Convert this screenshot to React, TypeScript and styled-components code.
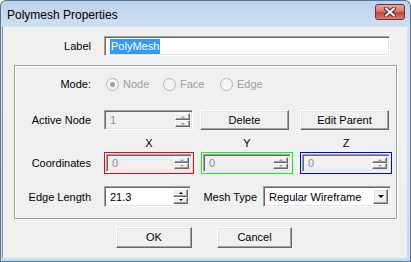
import React from "react";
import styled, { createGlobalStyle } from "styled-components";

const GlobalStyle = createGlobalStyle`
  html, body {
    margin: 0;
    padding: 0;
    background: #ffffff;
  }
  body {
    font-family: "Liberation Sans", Arial, sans-serif;
    font-size: 11px;
    color: #000;
  }
`;

const Window = styled.div`
  width: 411px;
  height: 262px;
  box-sizing: border-box;
  display: flex;
  flex-direction: column;
  background: linear-gradient(#bad2eb, #d2e2f3 30px, #c9ddf1);
  border: 1px solid #5b7594;
  border-bottom-color: #2f89c4;
  border-radius: 6px 6px 0 0;
  overflow: hidden;
`;

const TitleBar = styled.div`
  height: 26px;
  display: flex;
  align-items: center;
  justify-content: space-between;
  padding: 0 5px 0 6px;
  flex-shrink: 0;
`;

const Title = styled.span`
  font-size: 12px;
  color: #000;
  padding-top: 1px;
`;

const CloseButton = styled.div`
  width: 30px;
  height: 16px;
  margin-top: -4px;
  box-sizing: border-box;
  border: 1px solid #6e2b2b;
  border-radius: 3px;
  background: linear-gradient(#e8a69c, #d47a6c 45%, #c1443a 55%, #d87f6f);
  display: flex;
  align-items: center;
  justify-content: center;
`;

const Client = styled.div`
  flex: 1;
  display: flex;
  flex-direction: column;
  background: #f0f0f0;
  margin: 0 3px 3px 2px;
  box-shadow: -1px 0 0 #7d93ae;
`;

const FormRow = styled.div<{ $top: number; $h?: number }>`
  display: flex;
  align-items: center;
  gap: 13px;
  margin-top: ${(p) => p.$top}px;
  height: ${(p) => p.$h ?? 20}px;
`;

const Controls = styled.div`
  display: flex;
  align-items: center;
  height: 100%;
`;

const FieldLabel = styled.span<{ $w: number; $ml?: number }>`
  width: ${(p) => p.$w}px;
  margin-left: ${(p) => p.$ml ?? 0}px;
  text-align: right;
  flex-shrink: 0;
  white-space: nowrap;
`;

const Sunken = styled.div<{ $w: number; $h?: number; $off?: boolean; $ml?: number }>`
  width: ${(p) => p.$w}px;
  height: ${(p) => p.$h ?? 20}px;
  margin-left: ${(p) => p.$ml ?? 0}px;
  box-sizing: border-box;
  display: flex;
  align-items: stretch;
  flex-shrink: 0;
  background: ${(p) => (p.$off ? "#f0f0f0" : "#ffffff")};
  border: 1px solid;
  border-color: #a0a0a0 #ffffff #ffffff #a0a0a0;
  box-shadow: inset 1px 1px 0 #696969, inset -1px -1px 0 #e3e3e3;
  padding: 2px;
`;

const FieldText = styled.span<{ $off?: boolean }>`
  flex: 1;
  display: flex;
  align-items: center;
  padding-left: 3px;
  color: ${(p) => (p.$off ? "#8d8d8d" : "#000")};
  white-space: nowrap;
`;

const Selected = styled.span`
  background: #3399ff;
  color: #fff;
  padding: 1px 1px 2px;
`;

const SpinButtons = styled.div`
  width: 15px;
  display: flex;
  flex-direction: column;
`;

const SpinButton = styled.div`
  flex: 1;
  box-sizing: border-box;
  display: flex;
  align-items: center;
  justify-content: center;
  background: #f0f0f0;
  border: 1px solid;
  border-color: #ffffff #696969 #696969 #ffffff;
  box-shadow: inset -1px -1px 0 #a0a0a0;
`;

const Arrow = styled.span<{ $down?: boolean; $off?: boolean; $size?: number }>`
  width: 0;
  height: 0;
  border-left: ${(p) => p.$size ?? 2}px solid transparent;
  border-right: ${(p) => p.$size ?? 2}px solid transparent;
  ${(p) =>
    p.$down
      ? `border-top: ${p.$size ?? 2}px solid ${p.$off ? "#a0a0a0" : "#000"};`
      : `border-bottom: ${p.$size ?? 2}px solid ${p.$off ? "#a0a0a0" : "#000"};`}
`;

const PushButton = styled.div<{ $w: number; $h?: number; $ml?: number }>`
  width: ${(p) => p.$w}px;
  height: ${(p) => p.$h ?? 20}px;
  margin-left: ${(p) => p.$ml ?? 0}px;
  box-sizing: border-box;
  display: flex;
  align-items: center;
  justify-content: center;
  flex-shrink: 0;
  background: #f0f0f0;
  border: 1px solid;
  border-color: #ffffff #696969 #696969 #ffffff;
  box-shadow: inset -1px -1px 0 #a0a0a0, inset 1px 1px 0 #e3e3e3;
  padding-bottom: 1px;
`;

const GroupBox = styled.div`
  margin: 9px 0 0 11px;
  width: 383px;
  box-sizing: border-box;
  border: 1px solid #a0a0a0;
  box-shadow: inset 1px 1px 0 #fff, 1px 1px 0 #fff;
  padding-bottom: 11px;
  display: flex;
  flex-direction: column;
`;

const RadioGroup = styled.div<{ $off?: boolean }>`
  display: flex;
  align-items: center;
  margin-left: 2px;
  color: ${(p) => (p.$off ? "#a0a0a0" : "#000")};
`;

const RadioOption = styled.label`
  width: 57px;
  display: flex;
  align-items: center;
  gap: 4px;
`;

const RadioDot = styled.span<{ $checked?: boolean }>`
  width: 13px;
  height: 13px;
  box-sizing: border-box;
  border-radius: 50%;
  border: 1px solid #b9b9b9;
  background: #f4f4f4;
  display: flex;
  align-items: center;
  justify-content: center;
  &::after {
    content: "";
    width: 5px;
    height: 5px;
    border-radius: 50%;
    background: ${(p) => (p.$checked ? "#a3a3a3" : "transparent")};
  }
`;

const Columns = styled.div`
  display: flex;
  gap: 7px;
  height: 100%;
`;

const AxisLabel = styled.span<{ $w: number }>`
  width: ${(p) => p.$w}px;
  text-align: center;
  align-self: center;
`;

const AxisFrame = styled.div<{ $color: string; $w: number }>`
  width: ${(p) => p.$w}px;
  box-sizing: border-box;
  border: 1px solid ${(p) => p.$color};
  padding: 1px;
  display: flex;
`;

const ComboText = styled.span`
  flex: 1;
  display: flex;
  align-items: center;
  padding-left: 3px;
`;

const DropButton = styled(SpinButton)`
  flex: none;
  width: 15px;
  box-shadow: inset -1px -1px 0 #a0a0a0, inset 1px 1px 0 #e3e3e3;
`;

const Footer = styled.div`
  display: flex;
  justify-content: center;
  gap: 25px;
  margin-top: 8px;
  padding-right: 2px;
`;

const CloseIcon = () => (
  <svg width="12" height="10" viewBox="0 0 12 10">
    <path d="M2 1.5 L10 8.5 M10 1.5 L2 8.5" stroke="#5a1c1c" strokeWidth="4" strokeLinecap="square" />
    <path d="M2 1.5 L10 8.5 M10 1.5 L2 8.5" stroke="#ffffff" strokeWidth="2" strokeLinecap="square" />
  </svg>
);

const Spin = ({ value, w, h, off }: { value: string; w: number; h?: number; off?: boolean }) => (
  <Sunken $w={w} $h={h} $off={off}>
    <FieldText $off={off}>{value}</FieldText>
    <SpinButtons>
      <SpinButton>
        <Arrow $off={off} />
      </SpinButton>
      <SpinButton>
        <Arrow $down $off={off} />
      </SpinButton>
    </SpinButtons>
  </Sunken>
);

const axes = [
  { name: "X", color: "#ff0000", w: 90 },
  { name: "Y", color: "#00ff00", w: 92 },
  { name: "Z", color: "#0000ff", w: 92 },
];

const App = () => {
  return (
    <>
      <GlobalStyle />
      <Window>
        <TitleBar>
          <Title>Polymesh Properties</Title>
          <CloseButton>
            <CloseIcon />
          </CloseButton>
        </TitleBar>
        <Client>
          <FormRow $top={9}>
            <FieldLabel $w={88}>Label</FieldLabel>
            <Sunken $w={286}>
              <FieldText>
                <Selected>PolyMesh</Selected>
              </FieldText>
            </Sunken>
          </FormRow>

          <GroupBox>
            <FormRow $top={8}>
              <FieldLabel $w={76}>Mode:</FieldLabel>
              <RadioGroup $off>
                <RadioOption>
                  <RadioDot $checked />
                  Node
                </RadioOption>
                <RadioOption>
                  <RadioDot />
                  Face
                </RadioOption>
                <RadioOption>
                  <RadioDot />
                  Edge
                </RadioOption>
              </RadioGroup>
            </FormRow>

            <FormRow $top={16}>
              <FieldLabel $w={76}>Active Node</FieldLabel>
              <Controls>
                <Spin value="1" w={89} off />
                <PushButton $w={89} $ml={7}>Delete</PushButton>
                <PushButton $w={89} $ml={11}>Edit Parent</PushButton>
              </Controls>
            </FormRow>

            <FormRow $top={6} $h={14}>
              <FieldLabel $w={76} />
              <Columns>
                {axes.map((a) => (
                  <AxisLabel key={a.name} $w={a.w}>
                    {a.name}
                  </AxisLabel>
                ))}
              </Columns>
            </FormRow>

            <FormRow $top={2} $h={22}>
              <FieldLabel $w={76}>Coordinates</FieldLabel>
              <Columns>
                {axes.map((a) => (
                  <AxisFrame key={a.name} $color={a.color} $w={a.w}>
                    <Spin value="0" w={a.w - 4} h={18} off />
                  </AxisFrame>
                ))}
              </Columns>
            </FormRow>

            <FormRow $top={12} $h={21}>
              <FieldLabel $w={76}>Edge Length</FieldLabel>
              <Controls>
                <Spin value="21.3" w={87} h={21} />
                <FieldLabel $w={60} $ml={6}>Mesh Type</FieldLabel>
                <Sunken $w={128} $h={21} $ml={6}>
                  <ComboText>Regular Wireframe</ComboText>
                  <DropButton>
                    <Arrow $down $size={3} />
                  </DropButton>
                </Sunken>
              </Controls>
            </FormRow>
          </GroupBox>

          <Footer>
            <PushButton $w={76} $h={21}>OK</PushButton>
            <PushButton $w={75} $h={21}>Cancel</PushButton>
          </Footer>
        </Client>
      </Window>
    </>
  );
};

export default App;
